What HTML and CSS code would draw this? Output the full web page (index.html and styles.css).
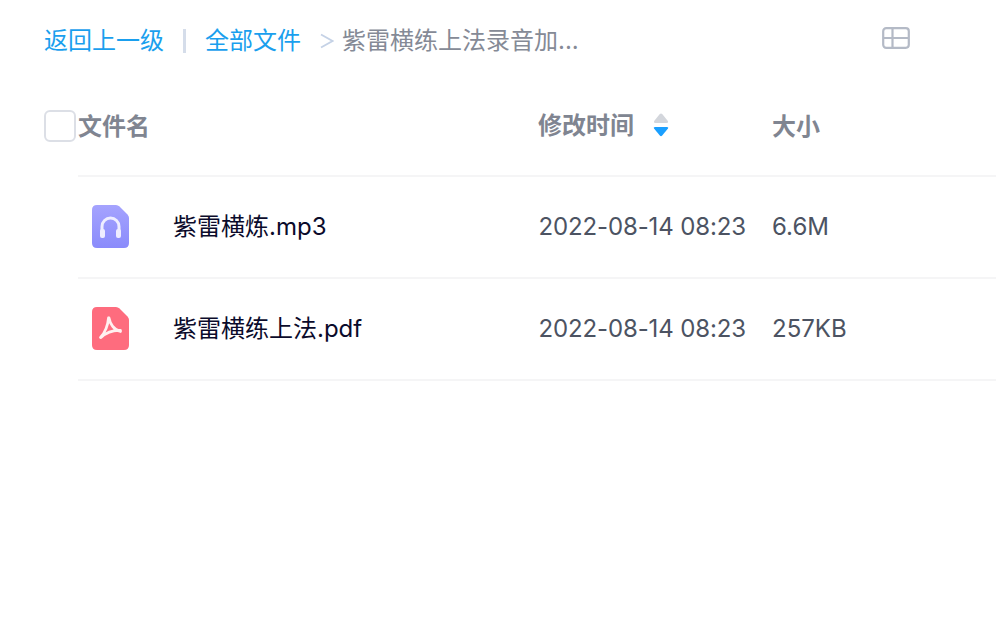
FILE: index.html
```html
<!DOCTYPE html>
<html lang="zh-CN">
<head>
    <meta charset="UTF-8">
    <title>文件列表</title>
    <link rel="stylesheet" href="styles.css">
</head>
<body>

    <!-- Breadcrumb -->
    <div class="top-bar">
        <a class="crumb-link">返回上一级</a>
        <span class="crumb-bar"></span>
        <a class="crumb-link">全部文件</a>
        <svg class="crumb-arrow" width="14" height="16" viewBox="0 0 14 16"><path d="M1 1.5 L12.5 8 L1 14.5" fill="none" stroke="#c5d2e6" stroke-width="1.8"/></svg>
        <span class="crumb-current">紫雷横练上法录音加...</span>
        <svg class="view-icon" width="28" height="22" viewBox="0 0 28 22">
            <rect x="1.2" y="1.2" width="25.6" height="19.6" rx="3" fill="none" stroke="#b4bac6" stroke-width="2.2"/>
            <path d="M10.5 1.5 V20.5 M1.5 11 H26.5" fill="none" stroke="#b4bac6" stroke-width="2.2"/>
        </svg>
    </div>

    <!-- Table header -->
    <div class="table-head">
        <span class="check-box"></span>
        <div class="col-name head-label">文件名</div>
        <div class="col-time head-time">
            修改时间
            <svg class="sort-icon" width="16" height="24" viewBox="0 0 16 24">
                <path d="M6.8 1 Q8 -0.2 9.2 1 L14.5 7.5 Q16 10 13.5 10 L2.5 10 Q0 10 1.5 7.5 Z" fill="#d3d6dc"/>
                <path d="M2 14 L14 14 Q16 14 14.8 15.8 L9.2 22.6 Q8 23.8 6.8 22.6 L1.2 15.8 Q0 14 2 14 Z" fill="#1a9fff"/>
            </svg>
        </div>
        <div class="col-size head-label">大小</div>
    </div>

    <!-- File rows -->
    <div class="file-list">
        <div class="file-row">
            <div class="file-icon">
                <svg width="37" height="43" viewBox="0 0 37 43">
                    <defs>
                        <linearGradient id="audioFill" x1="0" y1="0" x2="0" y2="1">
                            <stop offset="0" stop-color="#a5a3fe"/>
                            <stop offset="1" stop-color="#8a8bfb"/>
                        </linearGradient>
                    </defs>
                    <path d="M5 0 H24 Q26 0 27.5 1.5 L35.5 9.5 Q37 11 37 13 V38 Q37 43 32 43 H5 Q0 43 0 38 V5 Q0 0 5 0 Z" fill="url(#audioFill)"/>
                    <path d="M10 26 V21.5 A8.5 8.5 0 0 1 27 21.5 V26" fill="none" stroke="#eeedff" stroke-width="3"/>
                    <rect x="8" y="24" width="5" height="9" rx="2" fill="#eeedff"/>
                    <rect x="24" y="24" width="5" height="9" rx="2" fill="#eeedff"/>
                </svg>
            </div>
            <div class="file-name">紫雷横炼.mp3</div>
            <div class="col-time">2022-08-14 08:23</div>
            <div class="col-size">6.6M</div>
        </div>
        <div class="file-row">
            <div class="file-icon">
                <svg width="37" height="43" viewBox="0 0 37 43">
                    <path d="M5 0 H24 Q26 0 27.5 1.5 L35.5 9.5 Q37 11 37 13 V38 Q37 43 32 43 H5 Q0 43 0 38 V5 Q0 0 5 0 Z" fill="#fe6c7e"/>
                    <path d="M16.5 11 C16 17 13.5 25 8.5 30.5 M17 11 C18 17 22 23 28.5 24.5 M9 30.5 C14 26 21 23 28.5 23.5" fill="none" stroke="#fff0f0" stroke-width="2.8" stroke-linecap="round"/>
                </svg>
            </div>
            <div class="file-name">紫雷横练上法.pdf</div>
            <div class="col-time">2022-08-14 08:23</div>
            <div class="col-size">257KB</div>
        </div>
    </div>

</body>
</html>
```

FILE: styles.css
```css
body {
    font-family: Inter, "Noto Sans CJK SC", sans-serif;
    margin: 0;
    padding: 0;
    width: 996px;
    background-color: #fff;
    font-size: 24px;
    line-height: 36px;
}

.top-bar {
    display: flex;
    align-items: center;
    height: 36px;
    margin-top: 23px;
    padding-left: 44px;
}

.crumb-link {
    color: #1a9fee;
}

.crumb-bar {
    width: 3px;
    height: 24px;
    margin: 0 19px 0 19px;
    background-color: #d5ddea;
}

.crumb-arrow {
    margin: 0 8px 0 19px;
}

.crumb-current {
    color: #858a96;
}

.view-icon {
    margin-left: auto;
    margin-right: 86px;
    margin-top: -6px;
}

.table-head {
    display: flex;
    align-items: center;
    height: 116px;
    padding: 17px 0 0 44px;
    color: #808591;
    font-weight: 700;
    box-sizing: border-box;
}

.check-box {
    flex: none;
    width: 28px;
    height: 28px;
    border: 2px solid #dcdfe6;
    border-radius: 6px;
    margin-right: 2px;
}

.head-label {
    padding-top: 3px;
}

.col-name {
    width: 460px;
}

.col-time {
    width: 234px;
    flex: none;
}

.head-time {
    display: flex;
    align-items: center;
}

.sort-icon {
    margin: -1px 0 0 19px;
}

.col-size {
    flex: none;
}

.file-list {
    margin-left: 78px;
    border-top: 2px solid #f5f5f6;
}

.file-row {
    display: flex;
    align-items: center;
    height: 100px;
    border-bottom: 2px solid #f5f5f6;
    color: #4c5362;
}

.file-row .col-time {
    width: 233.5px;
    letter-spacing: -0.13px;
}

.file-icon {
    display: flex;
    width: 95px;
    padding: 0 0 2px 14px;
    box-sizing: border-box;
}

.file-name {
    width: 365.5px;
    color: #0b0b2b;
}
```
